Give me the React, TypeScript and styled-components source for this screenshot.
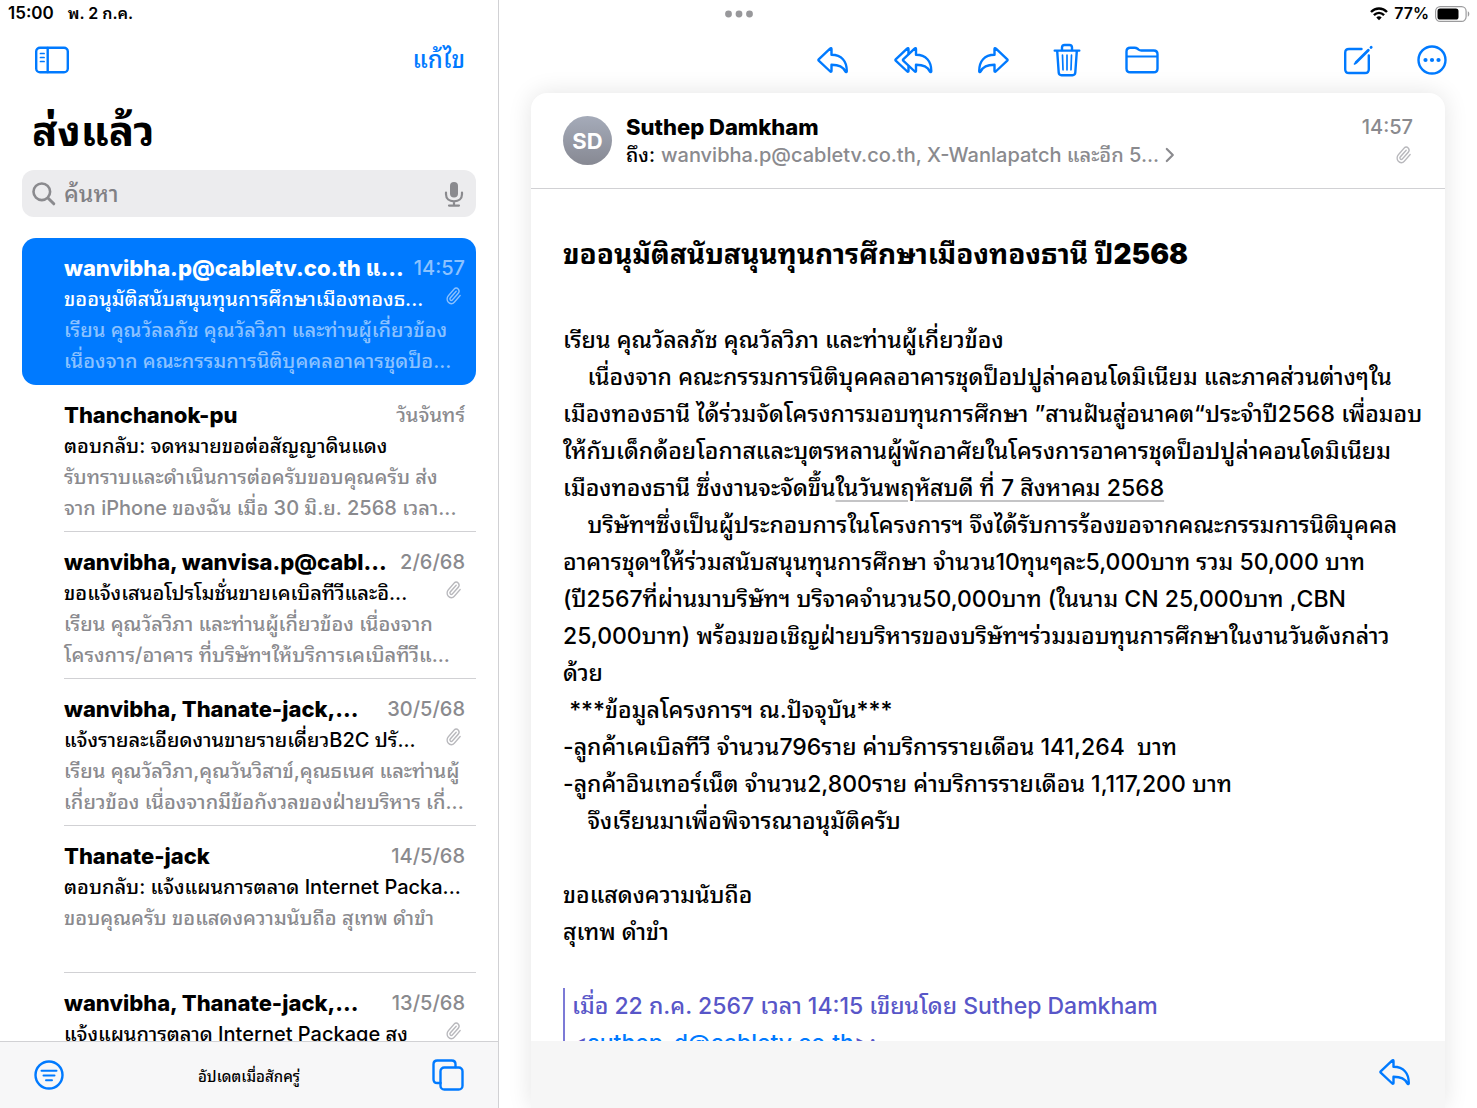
import React from "react";
import styled, { createGlobalStyle, css } from "styled-components";

const BLUE = "#007aff";
const GREY = "#8a8a8e";
const LINE = "#d1d1d4";

const GlobalStyle = createGlobalStyle`
  *, *::before, *::after { box-sizing: border-box; }
  html, body, #root { height: 100%; }
  body {
    margin: 0;
    overflow: hidden;
    background: #fff;
    color: #000;
    font-family: Inter, "Noto Sans Thai Looped", "Noto Looped Thai", Loma, Waree, Garuda, Sarabun, "Noto Sans Thai", sans-serif;
    font-weight: 500;
  }
  h1, h2, p, ul { margin: 0; padding: 0; }
  ul { list-style: none; }
`;

const Screen = styled.div`
  display: grid;
  grid-template-columns: 499px minmax(0, 1fr);
  grid-template-rows: 27px minmax(0, 1fr);
  height: 100vh;
`;

const StatusBar = styled.div`
  grid-area: 1 / 1 / 2 / 3;
  z-index: 1;
  display: grid;
  grid-template-columns: 1fr auto 1fr;
  align-items: center;
  padding: 0 7px 0 8px;
  font-size: 16px;
  font-weight: 600;
  line-height: 27px;
`;

const StatusGroup = styled.div<{ $end?: boolean }>`
  display: flex;
  align-items: center;
  gap: ${(p) => (p.$end ? "6px" : "14px")};
  justify-content: ${(p) => (p.$end ? "flex-end" : "flex-start")};
`;

const Clock = styled.time`
  font-size: 17px;
`;

const pane = css`
  display: flex;
  flex-direction: column;
  min-width: 0;
  min-height: 0;
  padding-top: 27px;
`;

const Sidebar = styled.aside`
  ${pane}
  grid-area: 1 / 1 / 3 / 2;
  border-right: 1px solid ${LINE};
`;

const Reader = styled.main`
  ${pane}
  grid-area: 1 / 2 / 3 / 3;
`;

const IconButton = styled.button`
  display: flex;
  flex: none;
  padding: 0;
  border: 0;
  background: none;
  color: ${BLUE};
  cursor: pointer;
`;

const TextButton = styled(IconButton)`
  font: inherit;
  font-size: 24px;
  line-height: 30px;
`;

const SidebarHeader = styled.header`
  display: flex;
  align-items: center;
  justify-content: space-between;
  flex: none;
  height: 66px;
  padding: 0 33px 0 34px;
`;

const Title = styled.h1`
  padding: 8px 32px 0;
  font-size: 42px;
  font-weight: 700;
  line-height: 60px;
`;

const SearchBox = styled.label`
  display: flex;
  align-items: center;
  flex: none;
  gap: 8px;
  height: 47px;
  margin: 9px 22px 21px;
  padding: 0 12px 0 10px;
  border-radius: 12px;
  background: #ececee;
  color: ${GREY};
`;

const SearchInput = styled.input`
  flex: 1;
  min-width: 0;
  padding: 0;
  border: 0;
  outline: 0;
  background: none;
  font: inherit;
  font-size: 23px;
  line-height: 36px;
  &::placeholder { color: #808084; opacity: 1; }
`;

const MailList = styled.ul`
  flex: 1;
  min-height: 0;
  overflow: hidden;
`;

const MailItem = styled.li<{ $active?: boolean }>`
  height: 147px;
  margin: 0 22px;
  padding-left: 42px;
  border-radius: ${(p) => (p.$active ? "14px" : "0")};
  background: ${(p) => (p.$active ? BLUE : "transparent")};
  color: ${(p) => (p.$active ? "#fff" : "#000")};
  --muted: ${(p) => (p.$active ? "#8cc2ff" : GREY)};
  --clip: ${(p) => (p.$active ? "#8cc2ff" : "#b8b8bc")};
`;

const MailInner = styled.div<{ $rule?: boolean }>`
  height: 100%;
  padding: 15px 11px 0 0;
  border-bottom: 1px solid ${(p) => (p.$rule ? LINE : "transparent")};
`;

const MailRow = styled.div`
  display: flex;
  align-items: center;
  justify-content: space-between;
  gap: 10px;
  height: 31px;
  white-space: pre;
`;

const Sender = styled.span`
  font-size: 22px;
  font-weight: 800;
  line-height: 31px;
`;

const When = styled.time`
  color: var(--muted);
  font-size: 20px;
  line-height: 31px;
`;

const MailSubject = styled.span`
  font-size: 20px;
  line-height: 31px;
`;

const Preview = styled.p`
  color: var(--muted);
  font-size: 20px;
  line-height: 31px;
  white-space: pre;
`;

const ClipSlot = styled.span`
  display: flex;
  padding: 0 3px 8px 0;
  color: var(--clip);
`;

const SidebarFooter = styled.footer`
  display: grid;
  grid-template-columns: 1fr auto 1fr;
  align-items: center;
  flex: none;
  height: 67px;
  padding: 0 34px;
  border-top: 1px solid ${LINE};
  background: #f7f7f8;
  font-size: 15px;
`;

const FooterEnd = styled.div`
  display: flex;
  justify-content: flex-end;
`;

const Toolbar = styled.header`
  display: grid;
  grid-template-columns: 1fr auto 1fr;
  align-items: center;
  flex: none;
  height: 66px;
  padding: 0 30px;
`;

const ToolGroup = styled.div<{ $end?: boolean }>`
  display: flex;
  grid-column: ${(p) => (p.$end ? 3 : 2)};
  align-items: center;
  justify-content: flex-end;
  gap: 45px;
`;

const Card = styled.article`
  display: flex;
  flex-direction: column;
  flex: 1;
  min-height: 0;
  margin: 0 32px;
  border-radius: 16px 16px 0 0;
  background: #fff;
  box-shadow: 0 0 24px rgba(0, 0, 0, 0.11);
`;

const CardHeader = styled.header`
  display: flex;
  align-items: center;
  flex: none;
  gap: 14px;
  height: 96px;
  padding: 0 32px;
  border-bottom: 1px solid ${LINE};
  --clip: #b8b8bc;
`;

const Avatar = styled.span`
  display: flex;
  align-items: center;
  justify-content: center;
  width: 49px;
  height: 49px;
  border-radius: 50%;
  background: linear-gradient(#a5abb9, #878993);
  color: #fff;
  font-size: 22px;
  font-weight: 700;
`;

const People = styled.div`
  flex: 1;
  min-width: 0;
`;

const From = styled.p`
  font-size: 22px;
  font-weight: 800;
  line-height: 28px;
`;

const To = styled.p`
  display: flex;
  align-items: center;
  gap: 6px;
  color: ${GREY};
  font-size: 20px;
  line-height: 28px;
  white-space: nowrap;
`;

const ToLabel = styled.span`
  color: #000;
`;

const Meta = styled.div`
  display: flex;
  flex-direction: column;
  align-items: flex-end;
  color: ${GREY};
  font-size: 20px;
  line-height: 28px;
`;

const MetaClip = styled(ClipSlot)`
  height: 28px;
  padding: 4px 1px 0 0;
`;

const CardBody = styled.div`
  flex: 1;
  min-height: 0;
  overflow: hidden;
  padding: 44px 32px 0;
  font-size: 23px;
  line-height: 37px;
  white-space: pre;
`;

const Subject = styled.h2`
  margin-bottom: 47px;
  font-size: 28px;
  font-weight: 700;
  line-height: 42px;
`;

const HeavyNumber = styled.span`
  font-weight: 900;
`;

const Paragraph = styled.p`
  min-height: 37px;
`;

const Detected = styled.span`
  text-decoration: underline;
  text-decoration-color: #c4c4c6;
  text-decoration-thickness: 2px;
  text-underline-offset: 4px;
`;

const Quote = styled.blockquote`
  margin: 0;
  padding-left: 7px;
  border-left: 2px solid #7c7ad6;
  color: #5856c8;
`;

const MailLink = styled.a`
  color: ${BLUE};
  text-decoration: none;
`;

const CardFooter = styled.footer`
  display: flex;
  align-items: center;
  justify-content: flex-end;
  flex: none;
  height: 67px;
  padding: 0 34px 6px;
  background: #f6f6f6;
`;

const Glyph = styled.svg`
  flex: none;
  overflow: visible;
`;

type IconProps = { w: number; h: number; sw?: number; children: React.ReactNode };

const Icon = ({ w, h, sw = 2.4, children }: IconProps) => (
  <Glyph
    width={w}
    height={h}
    viewBox={`0 0 ${w} ${h}`}
    fill="none"
    stroke="currentColor"
    strokeWidth={sw}
    strokeLinecap="round"
    strokeLinejoin="round"
    aria-hidden="true"
  >
    {children}
  </Glyph>
);

const ARROW =
  "M1.700 13.400 13.300 2.400c.5-.5 1.200-.2 1.200.5V8.800C24.500 9 29.800 15 29.800 25.200c0 1-.9 1.200-1.300.5C25.800 20.500 22.200 18.900 14.500 18.800V25c0 .8-.7 1-1.200.5L1.700 14.600c-.4-.4-.4-.8 0-1.200Z";

const ReplyIcon = () => (
  <Icon w={32} h={28}>
    <path d={ARROW} />
  </Icon>
);

const ForwardIcon = () => (
  <Icon w={32} h={28}>
    <path d={ARROW} transform="matrix(-1 0 0 1 32 0)" />
  </Icon>
);

const ReplyAllIcon = () => (
  <Icon w={38} h={28}>
    <path d={ARROW} transform="translate(7.500 0)" />
    <path d="M14.500 7.500V2.900c0-.7-.7-1-1.200-.5L1.700 13.400c-.4.4-.4.8 0 1.200l11.600 10.900c.5.500 1.200.3 1.200-.5V20.500" />
  </Icon>
);

const TrashIcon = () => (
  <Icon w={26} h={34}>
    <path d="M.7 7.600h24.600M3.200 8l1.500 21.500c.1 1.700 1.200 2.700 2.800 2.700h11c1.600 0 2.700-1 2.800-2.700L22.800 8" />
    <path d="M8 7V4.600c0-1.600 1-2.600 2.600-2.600h4.800C17 2 18 3 18 4.600V7" />
    <path strokeWidth="1.700" d="m8.500 12.200.5 14.600M13 12.200v14.600M17.500 12.200l-.5 14.600" />
  </Icon>
);

const FolderIcon = () => (
  <Icon w={34} h={28}>
    <path d="M1.500 22.500v-17c0-2.600 1.300-3.800 3.800-3.800h4.200c1.400 0 2.100.3 3.100 1.100l1 .8c.8.600 1.500.9 2.700.9h12.400c2.500 0 3.800 1.300 3.800 3.800v14.200c0 2.500-1.300 3.800-3.800 3.800H5.300c-2.500 0-3.800-1.300-3.800-3.800Z" />
    <path d="M2 10.500h30" strokeWidth="2" />
  </Icon>
);

const ComposeIcon = () => (
  <Icon w={28} h={30}>
    <path d="M17.500 4H5C2.500 4 1.200 5.300 1.200 7.800v16.400C1.200 26.700 2.500 28 5 28h16c2.500 0 3.800-1.300 3.800-3.800V10.500" />
    <path d="M12 17.500 24.300 5.200" strokeWidth="2.800" />
    <path d="m27 2.500.2-.2" strokeWidth="2.800" />
    <path d="m10.500 19 .9-.5" strokeWidth="1.600" />
  </Icon>
);

const MoreIcon = () => (
  <Icon w={30} h={30}>
    <circle cx="15" cy="15" r="13.500" />
    <g fill="currentColor" stroke="none">
      <circle cx="8.500" cy="15" r="2.100" />
      <circle cx="15" cy="15" r="2.100" />
      <circle cx="21.500" cy="15" r="2.100" />
    </g>
  </Icon>
);

const SidebarIcon = () => (
  <Icon w={36} h={28}>
    <rect x="2.200" y="1.700" width="31.600" height="24.600" rx="3.800" />
    <path d="M13.700 2v24" />
    <path d="M6.500 7.500h3.600M6.500 11.500h3.600M6.500 15.500h3.600" strokeWidth="1.700" />
  </Icon>
);

const FilterIcon = () => (
  <Icon w={30} h={30}>
    <circle cx="15" cy="15" r="13.500" />
    <path d="M7.500 10.800h15M9.500 15.500h11M12 20.200h6" strokeWidth="2" />
  </Icon>
);

const WindowsIcon = () => (
  <Icon w={32} h={32}>
    <path d="M8.500 24H5.300C2.800 24 1.500 22.700 1.500 20.200V5.300C1.500 2.800 2.800 1.500 5.300 1.500h14.400c2.500 0 3.800 1.300 3.800 3.800V8" />
    <rect x="8.500" y="8.500" width="22" height="22" rx="3.800" />
  </Icon>
);

const SearchIcon = () => (
  <Icon w={24} h={24} sw={2.6}>
    <circle cx="9.800" cy="9.800" r="8.300" />
    <path d="m16.200 16.200 5.600 5.600" strokeWidth="3" />
  </Icon>
);

const MicIcon = () => (
  <Icon w={20} h={26} sw={2.2}>
    <rect x="6" y="1" width="8" height="15.500" rx="4" fill="currentColor" stroke="none" />
    <path d="M2 11.500v1.800c0 4.300 3.300 7 8 7s8-2.700 8-7v-1.800M10 20.500v4M5 24.600h10" />
  </Icon>
);

const ClipIcon = () => (
  <Icon w={18} h={20} sw={1.9}>
    <path
      transform="translate(1 .5) scale(.7 .78)"
      d="m16 6-8.414 8.586a2 2 0 0 0 2.829 2.829l8.414-8.586a4 4 0 1 0-5.657-5.657l-8.379 8.551a6 6 0 1 0 8.485 8.485l8.379-8.551"
    />
  </Icon>
);

const ChevronIcon = () => (
  <Icon w={10} h={16} sw={2.2}>
    <path d="m1.800 2 6 6-6 6" />
  </Icon>
);

const DotsIcon = () => (
  <svg width="28" height="8" viewBox="0 0 28 8" fill="#98989b" aria-hidden="true">
    <circle cx="3.500" cy="4" r="3.400" />
    <circle cx="14" cy="4" r="3.400" />
    <circle cx="24.500" cy="4" r="3.400" />
  </svg>
);

const WifiIcon = () => (
  <svg width="18" height="14" viewBox="0 0 18 14" fill="none" stroke="#000" strokeWidth="2.400" aria-hidden="true">
    <path d="M1 5c4.500-4.600 11.500-4.600 16 0" />
    <path d="M3.900 8.200c3-2.900 7.200-2.900 10.200 0" />
    <path d="M6.300 10.400c1.600-1.400 3.800-1.400 5.400 0L9 13.200Z" fill="#000" stroke="none" />
  </svg>
);

const BatteryIcon = () => (
  <svg width="35" height="16" viewBox="0 0 35 16" aria-hidden="true">
    <rect x=".6" y=".6" width="30.500" height="14.800" rx="4.600" fill="none" stroke="#9b9b9d" strokeWidth="1.200" />
    <rect x="2.500" y="2.500" width="21" height="11" rx="2.600" />
    <path d="M32.800 5.300c2 .8 2 4.600 0 5.400Z" fill="#9b9b9d" />
  </svg>
);

type Mail = { from: string; when: string; subject: string; preview: string; clip?: boolean };

const MAILS: Mail[] = [
  {
    from: "wanvibha.p@cabletv.co.th แ...",
    when: "14:57",
    subject: "ขออนุมัติสนับสนุนทุนการศึกษาเมืองทองธ...",
    preview: "เรียน คุณวัลลภัช คุณวัลวิภา และท่านผู้เกี่ยวข้อง\nเนื่องจาก คณะกรรมการนิติบุคคลอาคารชุดป็อ...",
    clip: true,
  },
  {
    from: "Thanchanok-pu",
    when: "วันจันทร์",
    subject: "ตอบกลับ: จดหมายขอต่อสัญญาดินแดง",
    preview: "รับทราบและดำเนินการต่อครับขอบคุณครับ ส่ง\nจาก iPhone ของฉัน เมื่อ 30 มิ.ย. 2568 เวลา...",
  },
  {
    from: "wanvibha, wanvisa.p@cabl...",
    when: "2/6/68",
    subject: "ขอแจ้งเสนอโปรโมชั่นขายเคเบิลทีวีและอิ...",
    preview: "เรียน คุณวัลวิภา และท่านผู้เกี่ยวข้อง เนื่องจาก\nโครงการ/อาคาร ที่บริษัทฯให้บริการเคเบิลทีวีแ...",
    clip: true,
  },
  {
    from: "wanvibha, Thanate-jack,...",
    when: "30/5/68",
    subject: "แจ้งรายละเอียดงานขายรายเดี่ยวB2C ปรั...",
    preview: "เรียน คุณวัลวิภา,คุณวันวิสาข์,คุณธเนศ และท่านผู้\nเกี่ยวข้อง เนื่องจากมีข้อกังวลของฝ่ายบริหาร เกี่...",
    clip: true,
  },
  {
    from: "Thanate-jack",
    when: "14/5/68",
    subject: "ตอบกลับ: แจ้งแผนการตลาด Internet Packa...",
    preview: "ขอบคุณครับ ขอแสดงความนับถือ สุเทพ ดำขำ",
  },
  {
    from: "wanvibha, Thanate-jack,...",
    when: "13/5/68",
    subject: "แจ้งแผนการตลาด Internet Package สง",
    preview: "",
    clip: true,
  },
];

export default function App() {
  return (
    <>
      <GlobalStyle />
      <Screen>
        <StatusBar>
          <StatusGroup>
            <Clock>15:00</Clock>
            <span>พ. 2 ก.ค.</span>
          </StatusGroup>
          <DotsIcon />
          <StatusGroup $end>
            <WifiIcon />
            <span>77%</span>
            <BatteryIcon />
          </StatusGroup>
        </StatusBar>

        <Sidebar>
          <SidebarHeader>
            <IconButton aria-label="แถบด้านข้าง"><SidebarIcon /></IconButton>
            <TextButton>แก้ไข</TextButton>
          </SidebarHeader>
          <Title>ส่งแล้ว</Title>
          <SearchBox>
            <SearchIcon />
            <SearchInput type="text" placeholder="ค้นหา" aria-label="ค้นหา" />
            <MicIcon />
          </SearchBox>
          <MailList>
            {MAILS.map((m, i) => (
              <MailItem key={m.when} $active={i === 0}>
                <MailInner $rule={i > 0}>
                  <MailRow>
                    <Sender>{m.from}</Sender>
                    <When>{m.when}</When>
                  </MailRow>
                  <MailRow>
                    <MailSubject>{m.subject}</MailSubject>
                    {m.clip && <ClipSlot><ClipIcon /></ClipSlot>}
                  </MailRow>
                  <Preview>{m.preview}</Preview>
                </MailInner>
              </MailItem>
            ))}
          </MailList>
          <SidebarFooter>
            <IconButton aria-label="ฟิลเตอร์"><FilterIcon /></IconButton>
            <span>อัปเดตเมื่อสักครู่</span>
            <FooterEnd>
              <IconButton aria-label="หน้าต่าง"><WindowsIcon /></IconButton>
            </FooterEnd>
          </SidebarFooter>
        </Sidebar>

        <Reader>
          <Toolbar>
            <ToolGroup>
              <IconButton aria-label="ตอบกลับ"><ReplyIcon /></IconButton>
              <IconButton aria-label="ตอบกลับทั้งหมด"><ReplyAllIcon /></IconButton>
              <IconButton aria-label="ส่งต่อ"><ForwardIcon /></IconButton>
              <IconButton aria-label="ลบ"><TrashIcon /></IconButton>
              <IconButton aria-label="ย้าย"><FolderIcon /></IconButton>
            </ToolGroup>
            <ToolGroup $end>
              <IconButton aria-label="เขียน"><ComposeIcon /></IconButton>
              <IconButton aria-label="เพิ่มเติม"><MoreIcon /></IconButton>
            </ToolGroup>
          </Toolbar>
          <Card>
            <CardHeader>
              <Avatar>SD</Avatar>
              <People>
                <From>Suthep Damkham</From>
                <To>
                  <ToLabel>ถึง:</ToLabel>
                  <span>wanvibha.p@cabletv.co.th, X-Wanlapatch และอีก 5...</span>
                  <ChevronIcon />
                </To>
              </People>
              <Meta>
                <time>14:57</time>
                <MetaClip><ClipIcon /></MetaClip>
              </Meta>
            </CardHeader>
            <CardBody>
              <Subject>
                ขออนุมัติสนับสนุนทุนการศึกษาเมืองทองธานี ปี<HeavyNumber>2568</HeavyNumber>
              </Subject>
              <Paragraph>เรียน คุณวัลลภัช คุณวัลวิภา และท่านผู้เกี่ยวข้อง</Paragraph>
              <Paragraph>
                {"    เนื่องจาก คณะกรรมการนิติบุคคลอาคารชุดป็อปปูล่าคอนโดมิเนียม และภาคส่วนต่างๆใน\n"}
                {"เมืองทองธานี ได้ร่วมจัดโครงการมอบทุนการศึกษา ”สานฝันสู่อนาคต“ประจำปี2568 เพื่อมอบ\n"}
                {"ให้กับเด็กด้อยโอกาสและบุตรหลานผู้พักอาศัยในโครงการอาคารชุดป็อปปูล่าคอนโดมิเนียม\n"}
                {"เมืองทองธานี ซึ่งงานจะจัดขึ้น"}
                <Detected>ในวันพฤหัสบดี ที่ 7 สิงหาคม 2568</Detected>
              </Paragraph>
              <Paragraph>
                {"    บริษัทฯซึ่งเป็นผู้ประกอบการในโครงการฯ จึงได้รับการร้องขอจากคณะกรรมการนิติบุคคล\n"}
                {"อาคารชุดฯให้ร่วมสนับสนุนทุนการศึกษา จำนวน10ทุนๆละ5,000บาท รวม 50,000 บาท\n"}
                {"(ปี2567ที่ผ่านมาบริษัทฯ บริจาคจำนวน50,000บาท (ในนาม CN 25,000บาท ,CBN\n"}
                {"25,000บาท) พร้อมขอเชิญฝ่ายบริหารของบริษัทฯร่วมมอบทุนการศึกษาในงานวันดังกล่าว\n"}
                {"ด้วย"}
              </Paragraph>
              <Paragraph>
                {" ***ข้อมูลโครงการฯ ณ.ปัจจุบัน***\n"}
                {"-ลูกค้าเคเบิลทีวี จำนวน796ราย ค่าบริการรายเดือน 141,264  บาท\n"}
                {"-ลูกค้าอินเทอร์เน็ต จำนวน2,800ราย ค่าบริการรายเดือน 1,117,200 บาท\n"}
                {"    จึงเรียนมาเพื่อพิจารณาอนุมัติครับ"}
              </Paragraph>
              <Paragraph />
              <Paragraph>{"ขอแสดงความนับถือ\nสุเทพ ดำขำ"}</Paragraph>
              <Paragraph />
              <Quote>
                {"เมื่อ 22 ก.ค. 2567 เวลา 14:15 เขียนโดย Suthep Damkham\n<"}
                <MailLink href="mailto:suthep_d@cabletv.co.th">suthep_d@cabletv.co.th</MailLink>
                {">:"}
              </Quote>
            </CardBody>
            <CardFooter>
              <IconButton aria-label="ตอบกลับ"><ReplyIcon /></IconButton>
            </CardFooter>
          </Card>
        </Reader>
      </Screen>
    </>
  );
}
